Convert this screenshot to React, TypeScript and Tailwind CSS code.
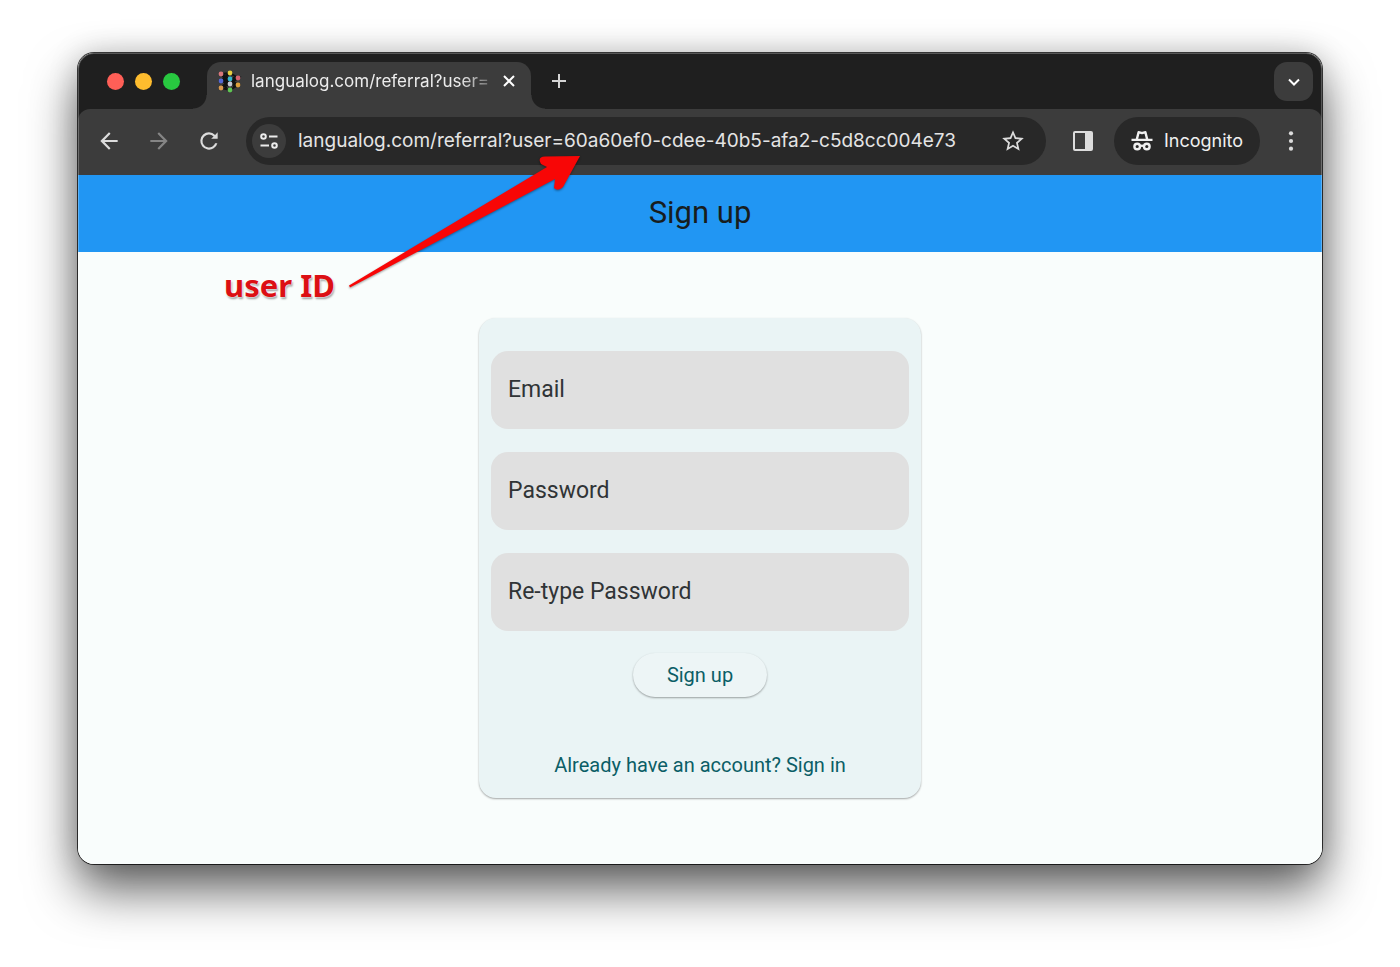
import React from "react";

function Favicon() {
  const links = "M221 74 230 73 238 78M221 81 230 73M221 74 230 79 221 81 230 84 221 88 230 90 238 85 230 84 238 78 230 79 238 85M221 74 230 84M221 88 230 79M226 77V88M234 77V88";
  const nodes: [number, number, string][] = [
    [221, 74, "#d9777b"],
    [221, 81, "#5468d4"],
    [221, 88, "#d99a4e"],
    [230, 73, "#e8cf3f"],
    [230, 79, "#35b5cf"],
    [230, 84, "#c6c9d6"],
    [230, 90, "#5fc653"],
    [238, 78, "#d4626f"],
    [238, 85, "#dda03c"],
  ];
  return (
    <svg className="h-6 w-6 shrink-0" viewBox="218 69 24 24" aria-hidden="true">
      <path d={links} fill="none" stroke="#121212" strokeWidth="2" />
      {nodes.map(([x, y, c]) => (
        <circle key={`${x}-${y}`} cx={x} cy={y} r="2.4" fill={c} />
      ))}
    </svg>
  );
}

function Glyph({ d, className = "h-6 w-6" }: { d: string; className?: string }) {
  return (
    <svg className={className} viewBox="0 0 24 24" fill="currentColor" aria-hidden="true">
      <path d={d} />
    </svg>
  );
}

const glyphs = {
  back: "M20 11H7.83l5.59-5.59L12 4l-8 8 8 8 1.41-1.41L7.83 13H20z",
  forward: "M12 4l-1.41 1.41L16.17 11H4v2h12.17l-5.58 5.59L12 20l8-8z",
  reload:
    "M17.65 6.35A7.96 7.96 0 0 0 12 4a8 8 0 1 0 7.73 10h-2.08A6 6 0 1 1 12 6c1.66 0 3.14.69 4.22 1.78L14 10h6V4z",
  star: "M22 9.24l-7.19-.62L12 2 9.19 8.63 2 9.24l5.46 4.73L5.82 21 12 17.27 18.18 21l-1.63-7.03zM12 15.4l-3.76 2.27 1-4.28-3.32-2.88 4.38-.38L12 6.1l1.71 4.04 4.38.38-3.32 2.88 1 4.28z",
};

function TabStrip() {
  return (
    <div className="flex h-14 items-stretch bg-[#1f1f1f] pr-[9px]">
      <div className="flex w-[129px] shrink-0 items-center gap-[11px] pl-[29px] pt-px">
        <button aria-label="Close window" className="h-[17px] w-[17px] rounded-full bg-[#ff5f57]" />
        <button aria-label="Minimize window" className="h-[17px] w-[17px] rounded-full bg-[#febc2e]" />
        <button aria-label="Zoom window" className="h-[17px] w-[17px] rounded-full bg-[#28c840]" />
      </div>
      <div className="relative mt-[9px] flex w-[324px] items-center rounded-t-[14px] bg-[#3c3c3c] pb-2.5 pl-[11px] pr-2.5">
        <span className="absolute -left-3.5 bottom-0 h-3.5 w-3.5 bg-[radial-gradient(circle_at_0_0,#1f1f1f_13px,#3c3c3c_14px)]" />
        <span className="absolute -right-3.5 bottom-0 h-3.5 w-3.5 bg-[radial-gradient(circle_at_100%_0,#1f1f1f_13px,#3c3c3c_14px)]" />
        <Favicon />
        <span className="ml-[9px] whitespace-nowrap text-[17px] leading-6 text-[#ececec] [mask-image:linear-gradient(90deg,#000_88%,rgba(0,0,0,0.3))]">
          langualog.com/referral?user=
        </span>
        <button aria-label="Close tab" className="ml-auto flex h-6 w-6 shrink-0 items-center justify-center text-white">
          <svg className="h-3 w-3" viewBox="0 0 12 12" fill="none" stroke="currentColor" strokeWidth="2" aria-hidden="true">
            <path d="M1 1 11 11M11 1 1 11" />
          </svg>
        </button>
      </div>
      <button aria-label="New tab" className="ml-4 flex w-6 items-center justify-center text-[#d5d5d5]">
        <svg className="h-3.5 w-3.5" viewBox="0 0 14 14" fill="none" stroke="currentColor" strokeWidth="2" aria-hidden="true">
          <path d="M7 0V14M0 7H14" />
        </svg>
      </button>
      <button
        aria-label="Search tabs"
        className="mb-2 mt-[9px] ml-auto flex w-[39px] items-center justify-center rounded-[13px] bg-[#3c3c3c] text-white"
      >
        <svg className="h-3 w-3" viewBox="0 0 12 12" fill="none" stroke="currentColor" strokeWidth="2" aria-hidden="true">
          <path d="M1 3.5 6 8.5 11 3.5" />
        </svg>
      </button>
    </div>
  );
}

function Toolbar() {
  return (
    <div className="bg-[#1f1f1f]">
      <div className="flex h-[66px] items-center rounded-t-xl bg-[#3c3c3c] pb-0.5 pl-[18px] pr-[19px] text-[#dcdcdc]">
        <button aria-label="Back">
          <Glyph d={glyphs.back} className="h-[26px] w-[26px]" />
        </button>
        <button aria-label="Forward" className="ml-6 text-[#858585]">
          <Glyph d={glyphs.forward} className="h-[26px] w-[26px]" />
        </button>
        <button aria-label="Reload" className="ml-6">
          <Glyph d={glyphs.reload} className="h-[26px] w-[26px]" />
        </button>
        <div className="ml-6 flex h-12 min-w-0 flex-1 items-center rounded-full bg-[#282828] pl-1.5 pr-5">
          <button
            aria-label="View site information"
            className="flex h-[34px] w-[34px] shrink-0 items-center justify-center rounded-full bg-[#3c3c3c] text-[#ececec]"
          >
            <svg className="h-5 w-5" viewBox="0 0 20 20" fill="none" stroke="currentColor" strokeWidth="2" aria-hidden="true">
              <circle cx="4.5" cy="5.5" r="2.3" />
              <path d="M10 5.5H18.5M1.5 14.5H10" />
              <circle cx="15.5" cy="14.5" r="2.3" />
            </svg>
          </button>
          <input
            aria-label="Address"
            type="text"
            defaultValue="langualog.com/referral?user=60a60ef0-cdee-40b5-afa2-c5d8cc004e73"
            className="ml-3 min-w-0 flex-1 bg-transparent text-[19px] leading-6 text-[#e4e4e4] outline-none"
          />
          <button aria-label="Bookmark this tab" className="ml-4 shrink-0">
            <Glyph d={glyphs.star} className="h-[26px] w-[26px]" />
          </button>
        </div>
        <button aria-label="Side panel" className="ml-[27px]">
          <svg className="h-5 w-5" viewBox="0 0 20 20" fill="none" aria-hidden="true">
            <rect x="1" y="1" width="18" height="18" rx="1" stroke="currentColor" strokeWidth="2" />
            <path d="M12 1H19V19H12Z" fill="currentColor" />
          </svg>
        </button>
        <button className="ml-[21px] flex h-12 shrink-0 items-center gap-2.5 rounded-full bg-[#282828] pl-4 pr-[17px] text-[18px] leading-6 text-[#f0f0f0]">
          <svg className="h-6 w-6" viewBox="0 0 24 24" fill="none" stroke="currentColor" strokeWidth="2.4" aria-hidden="true">
            <path d="M1.5 10.9H22.500" />
            <path d="M6.8 10.5 8.6 3.2Q10.4 3.5 12 4.1Q13.6 3.5 15.4 3.2L17.2 10.5" strokeLinejoin="round" />
            <circle cx="7.200" cy="17.5" r="2.8" />
            <circle cx="16.800" cy="17.5" r="2.8" />
            <path d="M10 17.2Q12 16 14 17.2" />
          </svg>
          Incognito
        </button>
        <button aria-label="Menu" className="ml-[19px]">
          <svg className="h-6 w-6" viewBox="0 0 24 24" fill="currentColor" aria-hidden="true">
            <circle cx="12" cy="4.3" r="2.1" />
            <circle cx="12" cy="12" r="2.1" />
            <circle cx="12" cy="19.7" r="2.1" />
          </svg>
        </button>
      </div>
    </div>
  );
}

function Field({ label, type }: { label: string; type: string }) {
  return (
    <label className="flex h-[78px] items-center gap-3 rounded-[17px] bg-[#e0e0e0] px-[17px] text-[23px] leading-7 text-[#303436]">
      {label}
      <input type={type} className="min-w-0 flex-1 bg-transparent outline-none" />
    </label>
  );
}

function SignUpCard() {
  return (
    <form className="mx-auto flex w-[442px] max-w-full flex-col rounded-[17px] bg-[#eaf4f5] px-3 pb-[19px] pt-[33px] text-[#0b5e66] shadow-[0_1px_2px_rgba(0,0,0,0.35)]">
      <div className="flex flex-col gap-[23px]">
        <Field label="Email" type="email" />
        <Field label="Password" type="password" />
        <Field label="Re-type Password" type="password" />
      </div>
      <button
        type="button"
        className="mt-[22px] h-11 self-center rounded-full bg-[#edf5f6] px-[34px] text-[20px] leading-6 shadow-[0_1px_2px_rgba(0,0,0,0.35)]"
      >
        Sign up
      </button>
      <a href="#sign-in" className="mt-[54px] self-center text-[20px] leading-7">
        Already have an account? Sign in
      </a>
    </form>
  );
}

function Annotation() {
  return (
    <div className="pointer-events-none absolute left-[146px] top-[100px]">
      <svg className="h-[140px] w-[360px]" viewBox="224 153 360 140" aria-hidden="true">
        <path
          d="M349 285.500 547 167 541 164Q537 157 545 156.500L580 156 563 187Q558 192 554 188L555 179 350 287.500Z"
          fill="#f80606"
          className="drop-shadow-[0_1px_1px_rgba(0,0,0,0.4)]"
        />
      </svg>
      <p className="absolute left-0 top-[112px] whitespace-nowrap font-['Noto_Sans',sans-serif] text-[31px] font-bold leading-10 text-[#dc1014] [text-shadow:0_0_2px_#fff,0_0_2px_#fff,1px_2px_2px_rgba(0,0,0,0.4)]">
        user ID
      </p>
    </div>
  );
}

export default function App() {
  return (
    <main className="min-h-screen bg-white px-[78px] pb-[102px] pt-[53px] font-['Roboto',sans-serif]">
      <div className="relative rounded-2xl shadow-[0_0_0_1px_rgba(0,0,0,0.75),0_26px_50px_rgba(0,0,0,0.62),0_0_30px_rgba(0,0,0,0.18)]">
        <div className="overflow-hidden rounded-2xl bg-[#f9fdfc]">
          <div className="font-['Inter',sans-serif]">
            <TabStrip />
            <Toolbar />
          </div>
          <header className="flex h-[77px] items-center justify-center bg-[#2196f3] pb-0.5 text-[#171d1e]">
            <h1 className="text-[31px] leading-9">Sign up</h1>
          </header>
          <section className="px-6 py-[66px]">
            <SignUpCard />
          </section>
        </div>
        <div className="pointer-events-none absolute inset-0 rounded-2xl ring-1 ring-inset ring-white/25" />
        <Annotation />
      </div>
    </main>
  );
}
